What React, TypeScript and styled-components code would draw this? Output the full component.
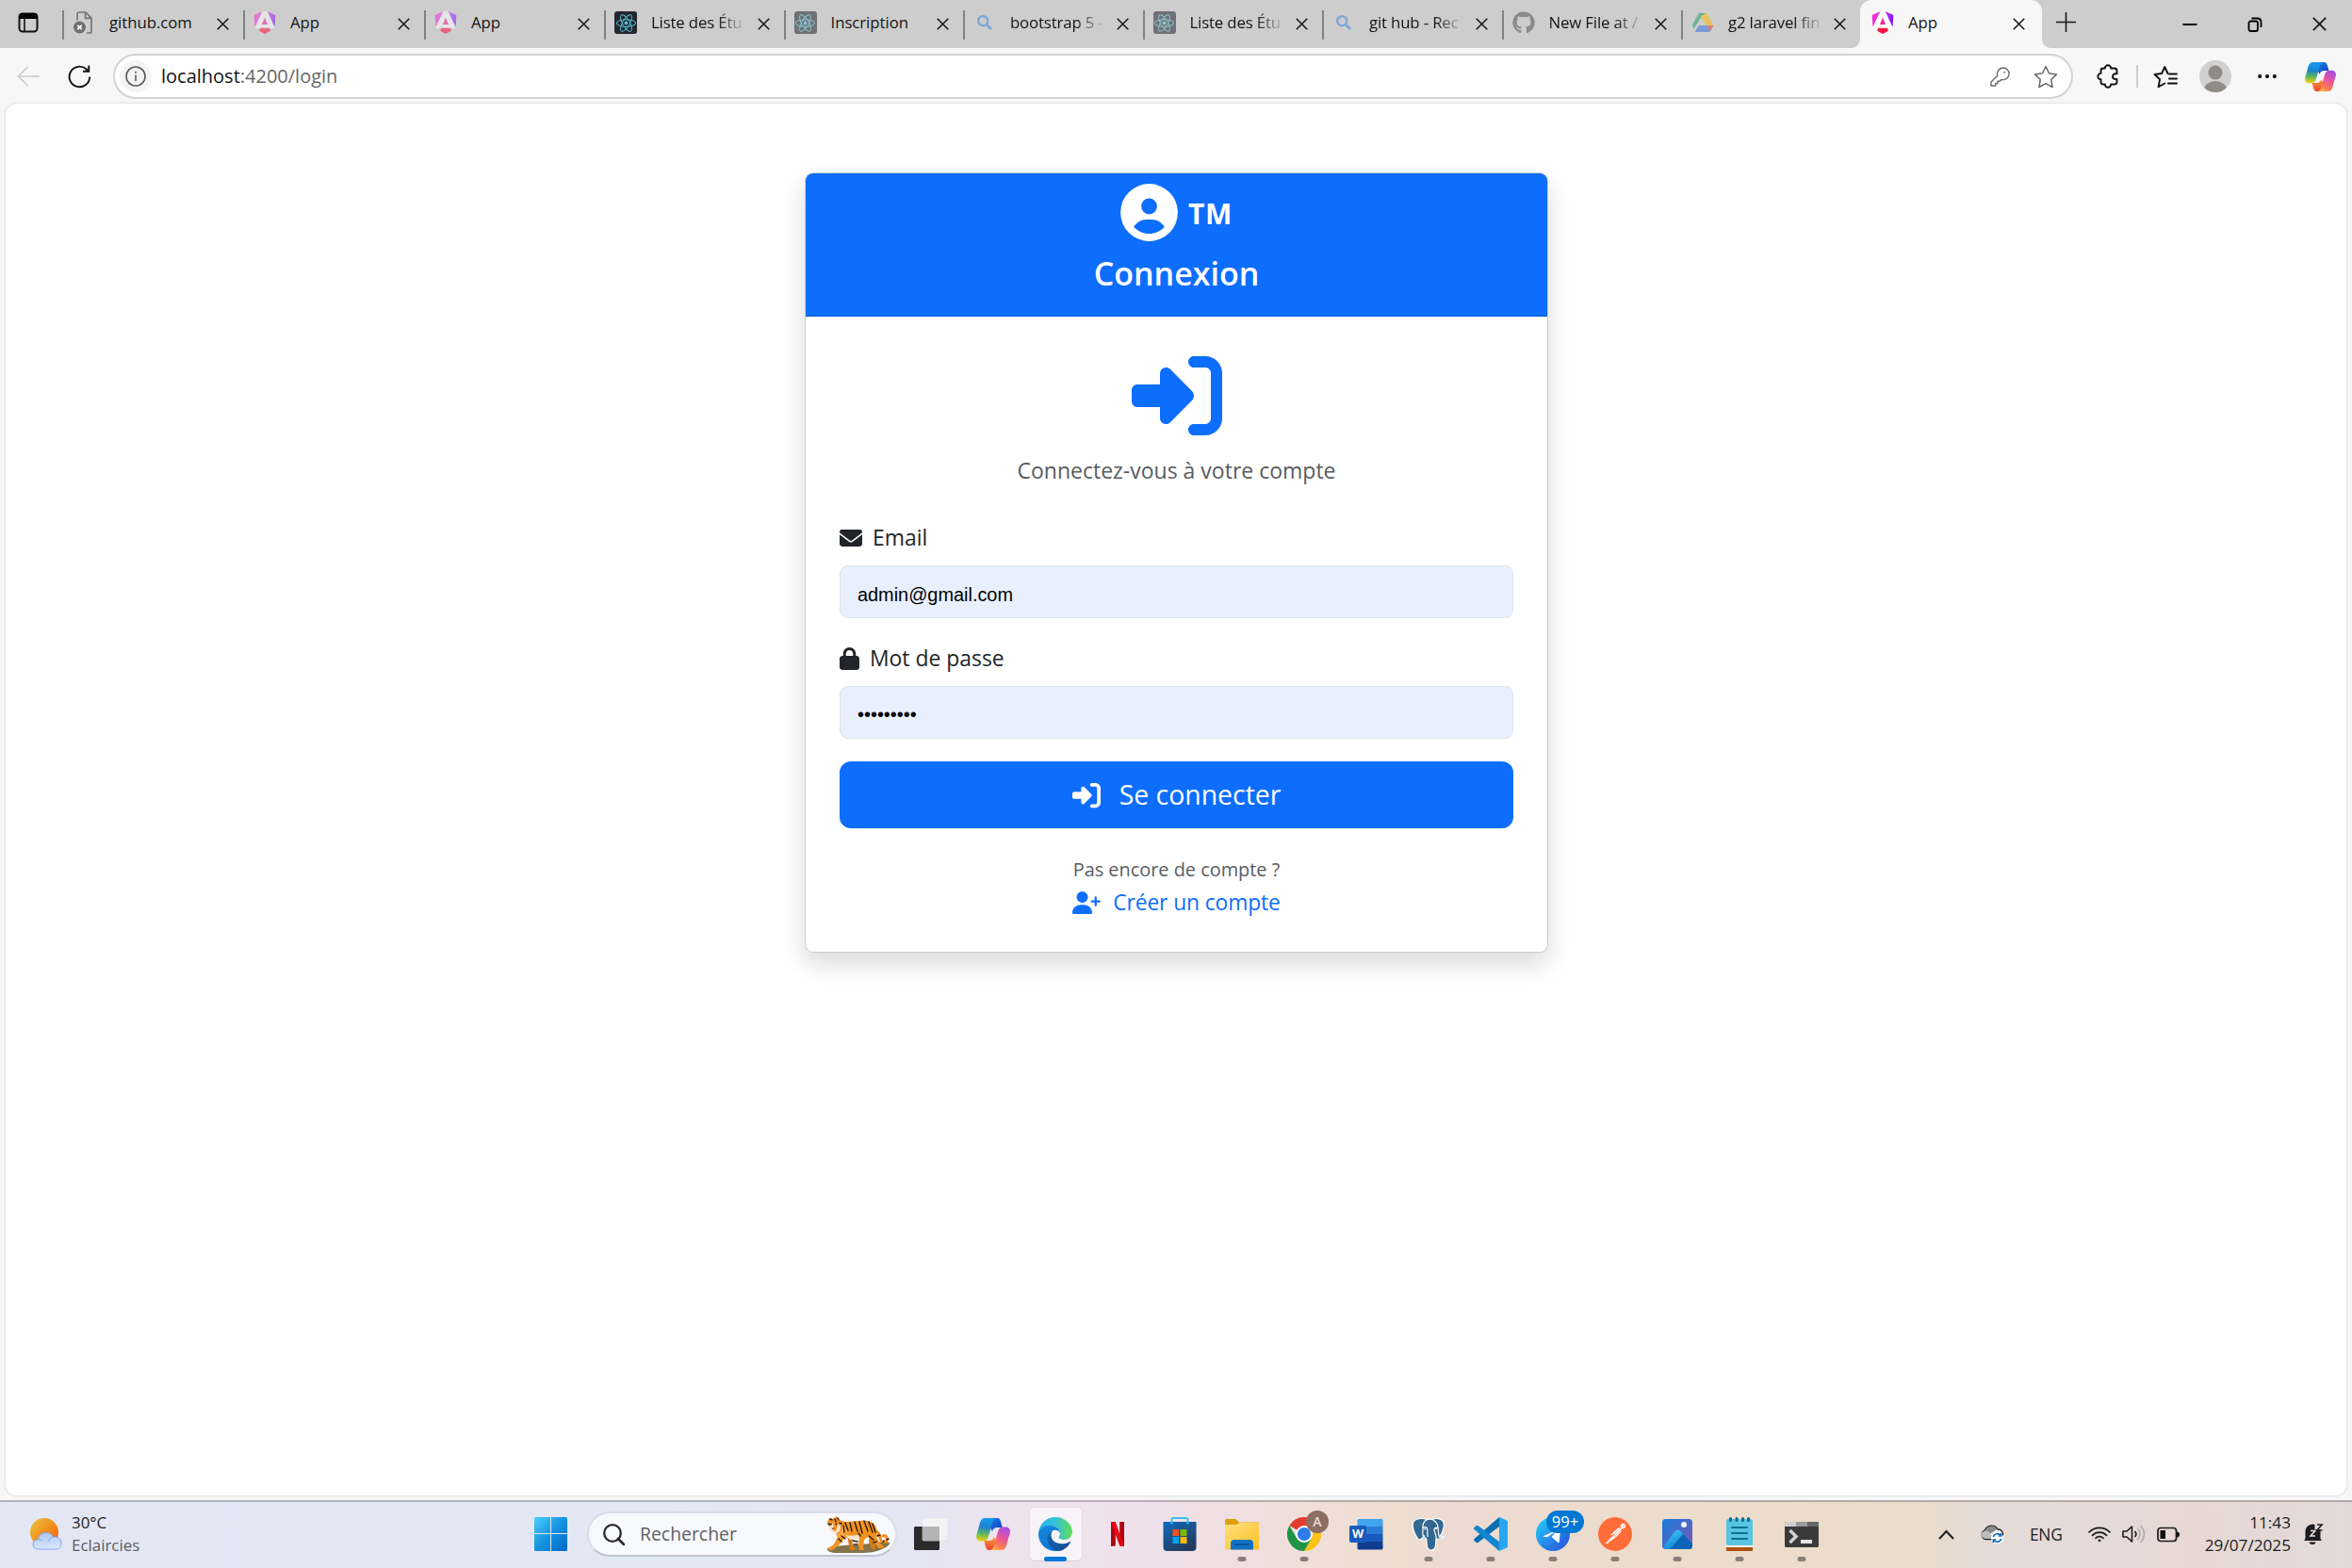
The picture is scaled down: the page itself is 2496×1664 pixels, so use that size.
import React from "react";
import styled, { createGlobalStyle, css } from "styled-components";
import { FaRightToBracket, FaEnvelope, FaLock, FaUserPlus, FaReact, FaGithub } from "react-icons/fa6";
import { SiPostman } from "react-icons/si";

const GlobalStyle = createGlobalStyle`
  * { box-sizing: border-box; }
  html, body { margin: 0; padding: 0; }
  body { font-family: "Open Sans", "Noto Sans", sans-serif; color: #1b1b1b; }
  svg { display: block; flex: none; }
`;

const Screen = styled.div`
  width: 2496px;
  height: 1664px;
  display: flex;
  flex-direction: column;
  overflow: hidden;
  background: #f7f7f7;
`;

/* ---------- Tab strip ---------- */

const TabStrip = styled.div`
  height: 51px;
  flex: none;
  display: flex;
  align-items: stretch;
  background: #cdcdcd;
`;

const StripStart = styled.div`
  width: 66px;
  display: flex;
  align-items: center;
  padding: 0 0 3px 19px;
`;

const TabBox = styled.div<{ $w: number; $active?: boolean }>`
  position: relative;
  width: ${(p) => p.$w}px;
  flex: none;
  display: flex;
  align-items: center;
  padding: 0 13px 3px 11px;
  ${(p) =>
    p.$active
      ? css`
          padding-left: 12px;
          padding-right: 16px;
          background: #f7f7f7;
          border-radius: 12px 12px 0 0;
          &::before,
          &::after {
            content: "";
            position: absolute;
            bottom: 0;
            width: 10px;
            height: 10px;
          }
          &::before {
            left: -10px;
            background: radial-gradient(circle at 0 0, transparent 9.5px, #f7f7f7 10.5px);
          }
          &::after {
            right: -10px;
            background: radial-gradient(circle at 100% 0, transparent 9.5px, #f7f7f7 10.5px);
          }
        `
      : css`
          background: linear-gradient(#838383, #838383) 0 11px / 2px 31px no-repeat;
        `}
`;

const Favicon = styled.span<{ $faded?: boolean }>`
  width: 24px;
  height: 24px;
  display: flex;
  align-items: center;
  justify-content: center;
  flex: none;
  opacity: ${(p) => (p.$faded ? 0.55 : 1)};
`;

const ReactTile = styled.span`
  width: 24px;
  height: 24px;
  display: flex;
  align-items: center;
  justify-content: center;
  border-radius: 3px;
  background: #23272f;
  color: #58c4dc;
`;

const TabTitle = styled.span<{ $fade?: boolean }>`
  width: 103px;
  margin-left: 15px;
  font-size: 16.8px;
  line-height: 30px;
  letter-spacing: -0.05px;
  white-space: nowrap;
  color: #141414;
  ${(p) =>
    p.$fade &&
    css`
      letter-spacing: -0.15px;
      mask-image: linear-gradient(90deg, #000 70px, transparent 101px);
    `}
`;

const CloseSlot = styled.span`
  margin-left: auto;
  padding: 2px 2px 0 0;
`;

const NewTab = styled.span`
  display: flex;
  align-items: center;
  padding: 0 0 4px 15px;
`;

const WindowControls = styled.div`
  margin-left: auto;
  display: flex;
  align-items: center;
  gap: 53px;
  padding: 0 27px 0 0;
`;

/* ---------- Address row ---------- */

const Toolbar = styled.div`
  height: 59px;
  flex: none;
  display: flex;
  align-items: center;
  padding: 1px 15px 0 18px;
`;

const BackSlot = styled.span`
  width: 54px;
`;
const ReloadSlot = styled.span`
  width: 48px;
`;

const AddressBar = styled.div`
  width: 2080px;
  height: 48px;
  flex: none;
  display: flex;
  align-items: center;
  border: 2px solid #d3d3d3;
  border-radius: 24px;
  background: #fff;
  padding: 0 14px 0 5px;
`;

const InfoBubble = styled.span`
  width: 34px;
  height: 34px;
  border-radius: 50%;
  background: #f4f4f4;
  display: flex;
  align-items: center;
  justify-content: center;
`;

const Url = styled.span`
  margin-left: 10px;
  font-size: 20px;
  line-height: 30px;
  color: #666;
  b {
    font-weight: 400;
    color: #111;
  }
`;

const AddressActions = styled.span`
  margin-left: auto;
  display: flex;
  align-items: center;
  gap: 25px;
`;

const ToolbarActions = styled.div`
  display: flex;
  align-items: center;
  padding-left: 5px;
`;

const ToolSlot = styled.span<{ $ml: number }>`
  margin-left: ${(p) => p.$ml}px;
`;

const ToolDivider = styled.span`
  width: 2px;
  height: 24px;
  margin-left: 17px;
  background: #cfcfcf;
`;

/* ---------- Page ---------- */

const PageFrame = styled.div`
  height: 1482px;
  flex: none;
  padding: 0 6px 5px;
`;

const Page = styled.main`
  height: 100%;
  display: flex;
  justify-content: center;
  align-items: flex-start;
  padding: 73px 0 0 1px;
  background: #fff;
  border-radius: 12px;
  box-shadow: 0 0 2px 1px rgba(0, 0, 0, 0.09);
`;

const Card = styled.section`
  width: 789px;
  height: 828px;
  border: 1px solid #cfcfd0;
  border-radius: 9px;
  background: #fff;
  box-shadow: 0 12px 24px rgba(0, 0, 0, 0.15);
`;

const CardHeader = styled.header`
  height: 152px;
  display: flex;
  flex-direction: column;
  align-items: center;
  padding-top: 11px;
  color: #fff;
  background: #0d6efd;
  border-bottom: 1px solid #0a5cd6;
  border-radius: 8px 8px 0 0;
`;

const Brand = styled.div`
  display: flex;
  align-items: center;
  gap: 11px;
  height: 61px;
  font-size: 30px;
  font-weight: 700;
  line-height: 40px;
  letter-spacing: 0.6px;
`;

const BrandName = styled.span`
  padding-top: 3px;
`;

const Heading = styled.h1`
  margin: 12px 0 0;
  font-size: 34px;
  font-weight: 600;
  line-height: 44px;
`;

const CardBody = styled.div`
  padding: 36px 36px 0;
  display: flex;
  flex-direction: column;
`;

const Hero = styled.div`
  display: flex;
  justify-content: center;
  color: #0d6efd;
`;

const Lead = styled.p`
  margin: 13px 0 0;
  text-align: center;
  font-size: 23px;
  line-height: 36px;
  color: #595c5f;
`;

const Label = styled.label<{ $top: number; $gap: number }>`
  display: flex;
  align-items: center;
  gap: ${(p) => p.$gap}px;
  height: 36px;
  margin-top: ${(p) => p.$top}px;
  color: #212529;
  font-size: 22.9px;
  line-height: 36px;
`;

const Field = styled.div<{ $lift?: number }>`
  height: 56px;
  margin-top: 11px;
  padding: ${(p) => 2 - (p.$lift || 0)}px 18px 0;
  border: 1px solid #dee2e6;
  border-radius: 9px;
  background: #e8f0fe;
  color: #000;
  font-family: "Liberation Sans", Arial, sans-serif;
  font-size: 19.9px;
  line-height: 56px;
`;

const Submit = styled.button`
  height: 71px;
  margin-top: 24px;
  padding: 0;
  border: 0;
  border-radius: 12px;
  background: #0d6efd;
  color: #fff;
  font-family: inherit;
  font-size: 28.4px;
  line-height: 45px;
  display: flex;
  align-items: center;
  justify-content: center;
  gap: 20px;
`;

const Hint = styled.p`
  margin: 28px 0 0;
  text-align: center;
  font-size: 19.9px;
  line-height: 32px;
  color: #595c5f;
`;

const SignUp = styled.a`
  display: flex;
  align-items: center;
  justify-content: center;
  gap: 13px;
  margin-top: 1px;
  font-size: 22.8px;
  line-height: 36px;
  letter-spacing: -0.1px;
  color: #0d6efd;
`;

/* ---------- Taskbar ---------- */

const Taskbar = styled.footer`
  height: 72px;
  flex: none;
  display: flex;
  align-items: center;
  padding-bottom: 2px;
  border-top: 2px solid rgba(90, 80, 90, 0.36);
  background: linear-gradient(
    90deg,
    #e4e7f4 0,
    #e1e8f4 300px,
    #e2e8f4 700px,
    #e6e5f3 980px,
    #eee3ed 1080px,
    #efe1ea 1230px,
    #f0dfe2 1290px,
    #efdfd8 1390px,
    #eeddd0 1490px,
    #ecdad3 1540px,
    #ecdccf 1640px,
    #ebdcca 1950px,
    #e9dccb 2040px,
    #e4dbd8 2110px,
    #e5dad7 2220px,
    #e8d8d3 2330px,
    #e2dad9 2496px
  );
`;

const Weather = styled.div`
  width: 567px;
  flex: none;
  display: flex;
  align-items: center;
  gap: 10px;
  padding-left: 32px;
`;

const Lines = styled.div<{ $right?: boolean }>`
  display: flex;
  flex-direction: column;
  align-items: ${(p) => (p.$right ? "flex-end" : "flex-start")};
  font-size: ${(p) => (p.$right ? 17.2 : 16.9)}px;
  line-height: 24px;
  color: #1c1c1e;
`;

const Muted = styled.span`
  color: #5b5d63;
`;

const StartSlot = styled.div`
  width: 56px;
  flex: none;
`;

const Search = styled.div`
  width: 329px;
  height: 48px;
  flex: none;
  display: flex;
  align-items: center;
  padding: 0 5px 0 15px;
  border: 2px solid #dadcea;
  border-bottom-color: #c3c5d2;
  border-radius: 24px;
  background: #f8f9fd;
  color: #5f6065;
  font-size: 19.4px;
  line-height: 30px;
`;

const SearchText = styled.span`
  flex: 1;
  margin-left: 16px;
`;

const Apps = styled.div`
  display: flex;
  flex: none;
  margin-left: 3px;
`;

const AppCell = styled.div`
  position: relative;
  width: 66px;
  height: 68px;
  display: flex;
  align-items: center;
  justify-content: center;
`;

const ActiveTile = styled.div`
  width: 57px;
  height: 58px;
  flex: none;
  border: 1px solid #e6dde7;
  border-bottom-color: #d8ced8;
  border-radius: 6px;
  background: #f8f3f8;
  display: flex;
  align-items: center;
  justify-content: center;
  padding-bottom: 1px;
`;

const Pip = styled.span<{ $active?: boolean }>`
  position: absolute;
  bottom: 5px;
  left: 50%;
  width: ${(p) => (p.$active ? 24 : 9)}px;
  height: 5px;
  transform: translateX(-50%);
  border-radius: 3px;
  background: ${(p) => (p.$active ? "#0078d7" : "#877e78")};
`;

const Badge = styled.span<{ $blue?: boolean }>`
  position: absolute;
  top: 9px;
  left: ${(p) => (p.$blue ? 26 : 35)}px;
  width: ${(p) => (p.$blue ? 40 : 24)}px;
  height: 24px;
  border-radius: 12px;
  background: ${(p) => (p.$blue ? "#0078d4" : "#8d6e63")};
  color: ${(p) => (p.$blue ? "#fff" : "#e3d9d5")};
  font-size: ${(p) => (p.$blue ? 16.5 : 14)}px;
  font-weight: ${(p) => (p.$blue ? 400 : 600)};
  line-height: 24px;
  text-align: center;
`;

const WordBadge = styled.span`
  position: absolute;
  left: 15px;
  top: 25px;
  width: 18px;
  height: 18px;
  border-radius: 2px;
  background: #185abd;
  color: #fff;
  font-size: 12.5px;
  font-weight: 700;
  line-height: 18px;
  text-align: center;
`;

const Tray = styled.div`
  margin-left: auto;
  display: flex;
  align-items: center;
  padding-right: 30px;
`;

const Language = styled.span`
  width: 35px;
  margin: 0 27px 0 27px;
  font-size: 17.4px;
  letter-spacing: -0.3px;
  line-height: 26px;
  color: #1c1c1e;
`;

const TrayGroup = styled.div`
  display: flex;
  align-items: center;
  gap: 12px;
  margin-right: 26px;
`;

const Clock = styled.div`
  width: 92px;
  margin-right: 13px;
`;

/* ---------- Drawings ---------- */

const CloseGlyph = ({ size = 13 }: { size?: number }) => (
  <svg width={size} height={size} viewBox="0 0 14 14" fill="none" stroke="#1a1a1a" strokeWidth="1.7">
    <path d="M.8.8l12.4 12.4M13.2.8L.8 13.2" />
  </svg>
);

const AngularMark = ({ id }: { id: string }) => (
  <svg width="24" height="24" viewBox="0 0 24 24">
    <defs>
      <linearGradient id={id} gradientUnits="userSpaceOnUse" x1="1" y1="3" x2="24" y2="9">
        <stop offset="0" stopColor="#f62bd0" />
        <stop offset="0.5" stopColor="#e33af0" />
        <stop offset="1" stopColor="#6d14ff" />
      </linearGradient>
      <linearGradient id={`${id}a`} gradientUnits="userSpaceOnUse" x1="8" y1="14" x2="15" y2="8">
        <stop offset="0" stopColor="#fb1f62" />
        <stop offset="1" stopColor="#ea35d8" />
      </linearGradient>
    </defs>
    <path fill="#fff" opacity="0.85" d="M9.308 0h5.384l7.832 16.855-.9 1.6-4.912-.744H7.288l-4.912.744-.9-1.6z" />
    <path fill={`url(#${id})`} d="M14.692 0l7.832 16.855.814-12.856zM9.308 0L.662 3.999l.814 12.856z" />
    <path fill={`url(#${id}a)`} d="M12 6.4l3.1 7.53H8.9z" />
    <path fill="#fb1342" d="M16.712 17.711H7.288l-1.204 2.916L12 24l5.916-3.373z" />
  </svg>
);

const BrokenFile = () => (
  <svg width="24" height="24" viewBox="0 0 24 24" fill="none" stroke="#777" strokeWidth="1.7">
    <path d="M5 9.500V3a2 2 0 012-2h7l6 6.300V21a2 2 0 01-2 2h-3M13.500 1v6.300H20" />
    <circle cx="7.500" cy="17" r="6.500" fill="#6f6f6f" stroke="none" />
    <path d="M5.300 14.800l4.400 4.400M9.700 14.800l-4.400 4.400" stroke="#fff" />
  </svg>
);

const BingSearch = () => (
  <svg width="18" height="18" viewBox="0 0 18 18" fill="none" stroke="#3f8ad8" strokeWidth="2.4">
    <circle cx="7.2" cy="7.2" r="5" />
    <path d="M11 11l5 5" strokeWidth="3" />
  </svg>
);

const DriveMark = () => (
  <svg width="24" height="22" viewBox="0 0 24 22">
    <path fill="#1ea362" d="M8 1h4.6L4.6 14.5 2.7 17.5.6 14z" />
    <path fill="#0f9d58" d="M8 1h8l-4 6.6z" />
    <path fill="#ffba00" d="M16 1l7.400 13h-7.800L9.600 4z" />
    <path fill="#3777e3" d="M7.600 14H23.400l-4 7H3.700z" />
    <path fill="#ea4335" d="M17 14h6.400l-3.500 6.200z" />
  </svg>
);

const Copilot = ({ w, h, id }: { w: number; h: number; id: string }) => (
  <svg width={w} height={h} viewBox="0 0 36 34" preserveAspectRatio="none">
    <defs>
      <linearGradient id={`${id}a`} x1="0.4" y1="0" x2="0.3" y2="1">
        <stop offset="0.1" stopColor="#1497e8" />
        <stop offset="0.4" stopColor="#1f83c9" />
        <stop offset="0.68" stopColor="#5cb75b" />
        <stop offset="0.98" stopColor="#f0cf12" />
      </linearGradient>
      <linearGradient id={`${id}b`} x1="0.7" y1="0" x2="0.3" y2="1">
        <stop offset="0" stopColor="#a64be6" />
        <stop offset="0.45" stopColor="#e9569b" />
        <stop offset="0.8" stopColor="#fb7a52" />
        <stop offset="1" stopColor="#ffae4c" />
      </linearGradient>
      <linearGradient id={`${id}c`} x1="0" y1="0" x2="1" y2="1">
        <stop offset="0" stopColor="#1a8ff0" />
        <stop offset="1" stopColor="#1239b8" />
      </linearGradient>
      <linearGradient id={`${id}d`} x1="0" y1="0" x2="0" y2="1">
        <stop offset="0" stopColor="#f99c2e" />
        <stop offset="1" stopColor="#ea4335" />
      </linearGradient>
    </defs>
    <path fill={`url(#${id}c)`} d="M9 0h13c3 0 3.6 2 4.4 5l1.3 5h-5c-3.200 0-4.700 1-5.700 4z" />
    <path fill={`url(#${id}d)`} d="M27 34H14c-3 0-3.600-2-4.400-5L8.300 24h5c3.200 0 4.700-1 5.700-4z" />
    <path fill={`url(#${id}a)`} d="M9.500 0H21c-2.500.6-3.300 3-4 5.500l-4 14c-1 3.500-2.600 5-6 5H5c-4 0-5.600-3-4.600-7L4 5c1-3.200 2.500-5 5.500-5z" />
    <path fill={`url(#${id}b)`} d="M26.500 34H15c2.500-.6 3.300-3 4-5.500l4-14c1-3.500 2.600-5 6-5h2c4 0 5.600 3 4.600 7L32 29c-1 3.200-2.500 5-5.500 5z" />
  </svg>
);

const AccountCircle = () => (
  <svg width="61" height="61" viewBox="0 0 61 61">
    <circle cx="30.5" cy="30.5" r="30.4" fill="#fff" />
    <circle cx="30.5" cy="24" r="8.4" fill="#0d6efd" />
    <path fill="#0d6efd" d="M14.200 45.700C17.300 41 22 38 27 38h7c5 0 9.700 3 12.800 7.700C42.600 50.300 37 53 30.500 53s-12.100-2.700-16.300-7.300z" />
  </svg>
);

const Tiger = () => (
  <svg width="68" height="40" viewBox="0 0 68 40">
    <path fill="#84734a" d="M1 35c8-2 20-4 30-3 10-1 24-4 36-3 1 2-3 5-8 7-6 3-14 4-24 4H12C5 40 0 38 1 35z" />
    <path fill="none" stroke="#ee8a1c" strokeWidth="3" strokeLinecap="round" d="M53 17c5 3 3 9 6 11s6 0 5-4c-.5-2-2-3-4-2" />
    <path fill="#d97913" d="M22 22l5 1 1 10 3 2-1 2h-5zM46 20l6 3-2 5 2 7 1 1h-5l-3-8z" />
    <path fill="#f2921f" d="M3 3l4 1 4-3 3 4 6 2c8 0 15-2 24-1 6 1 10 6 10 13l-1 4 4 7 4 3-1 2h-5l-6-9-5-3-4 3-1 8 1 3h-5l-1-6 1-8-9 0-6 1-6 7-6 5-2 1H3l-1-2 6-4 4-8-2-5-6-3-3-8z" />
    <path fill="#fae3cb" d="M4 8l3 1 1 6-1 3-4-2zM12 9l3 3-1 5-5 3-1-2 3-3zM20 21c5 1 11 1 15-1l-1 5-9 1z" />
    <path fill="#f7a744" d="M12 4l5 6-2 8-5 4 5 2 8-6z" />
    <g stroke="#2d1a0d" strokeWidth="1.400" fill="none" strokeLinecap="round">
      <path d="M20 8l3 8M25 8l2 9M30 7l3 10M35 7l3 12M40 6l4 11M45 7l4 11M49 9l3 9M18 11l1 7M16 22l4 3M13 25l3 3M28 27l5 1M29 31l4 0M45 22l5 4M50 29l3-1M54 22l3-1M60 29l1-2M64 26l2-1M4 4l2 1M9 4l1 3M12 3l1 2M2 9l2 1M14 8l2 1M34 19l2 3" />
    </g>
    <circle cx="5" cy="9.500" r="1" fill="#222" />
    <circle cx="10.500" cy="9.500" r="1" fill="#222" />
    <path d="M5.500 13.500h3l-1.500 2z" fill="#6b2c1a" />
  </svg>
);

const WeatherIcon = () => (
  <svg width="34" height="34" viewBox="0 0 34 34">
    <defs>
      <linearGradient id="sun" x1="0.100" y1="0.100" x2="0.900" y2="0.800">
        <stop offset="0" stopColor="#edbd36" />
        <stop offset="1" stopColor="#f26a0c" />
      </linearGradient>
      <linearGradient id="cloud" x1="0" y1="0" x2="0.200" y2="1">
        <stop offset="0" stopColor="#a9c4f2" />
        <stop offset="1" stopColor="#d7e5fb" />
      </linearGradient>
    </defs>
    <circle cx="15" cy="15" r="15" fill="url(#sun)" />
    <path fill="url(#cloud)" stroke="#84a5e8" strokeWidth="1" d="M8.500 33C5 33 3 31 3 28s2.500-5.300 5.500-5.300C9 18 12.500 15.500 17 15.500c4 0 6.500 2 7.500 4.500 5-.6 8.500 2.400 8.500 6.500 0 4-2.500 6.500-5.500 6.500z" />
    <path fill="none" stroke="#84a5e8" strokeWidth="1" d="M20 25c0-3 2-4.800 4.500-5M8.500 22.700c2 0 3.500.5 4.300 1.500" />
  </svg>
);

const WindowsStart = () => (
  <svg width="35" height="36" viewBox="0 0 35 36">
    <defs>
      <linearGradient id="win" x1="0" y1="0" x2="1" y2="1">
        <stop offset="0" stopColor="#4fd0fb" />
        <stop offset="0.500" stopColor="#1492df" />
        <stop offset="1" stopColor="#0067c8" />
      </linearGradient>
    </defs>
    <path fill="url(#win)" d="M1.500 0H17v17H0V1.500Q0 0 1.500 0zM18 0h15.500Q35 0 35 1.500V17H18zM0 18h17v18H1.500Q0 36 0 34.500zM18 18h17v16.500q0 1.500-1.500 1.500H18z" />
  </svg>
);

const TaskView = () => (
  <svg width="36" height="34" viewBox="0 0 36 34">
    <rect x="0" y="9" width="27" height="25" rx="1.500" fill="#2a2a2b" />
    <rect x="9" y="0" width="27" height="24" rx="1.500" fill="#f3f3f4" stroke="#dcdce0" strokeWidth="0.700" />
    <path d="M9 9h18v15H10.500Q9 24 9 22.500z" fill="#b3b3b3" />
  </svg>
);

const EdgeIcon = () => (
  <svg width="36" height="36" viewBox="0 0 36 36">
    <defs>
      <linearGradient id="edgeA" x1="0" y1="0.400" x2="1" y2="0.400">
        <stop offset="0" stopColor="#25b4e6" />
        <stop offset="0.500" stopColor="#35c1d8" />
        <stop offset="1" stopColor="#63dd52" />
      </linearGradient>
      <linearGradient id="edgeB" x1="0" y1="0" x2="0.500" y2="1">
        <stop offset="0" stopColor="#1687dd" />
        <stop offset="1" stopColor="#0a7ad6" />
      </linearGradient>
      <linearGradient id="edgeC" x1="0" y1="0" x2="1" y2="0.500">
        <stop offset="0" stopColor="#1067b4" />
        <stop offset="1" stopColor="#134d96" />
      </linearGradient>
    </defs>
    <path fill="url(#edgeA)" d="M0 17C1 7 8.500 0 18 0c10.500 0 18 8 18 15.500 0 5-3.800 8.500-8.500 8.500-3.500 0-6-1.500-6-2.500s1.500-1.500 1.500-4c0-3-3-5.500-7-5.500C9 12 2.500 13 0 17z" />
    <path fill="url(#edgeB)" d="M0 18C.5 12 6 9 11.500 9c6.500 0 11.500 4 11.500 8-.5-1.800-2.500-3.200-5-3.200-5 0-8 4.500-8 9C10 29 15 34 22 35.500c-1.300.4-2.700.5-4 .5C8 36 0 28 0 18z" />
    <path fill="url(#edgeC)" d="M15.500 14.300c-1.700 1.500-2 3.200-2 5 0 5 4.500 9 11 9 4 0 7-1.200 8.800-2.400.6-.3 1 .2.700.8C31 32.500 25.500 36 20.500 36 14 35.500 9.500 29 9.500 23c0-4.500 2.500-7.700 6-8.700z" />
  </svg>
);

const NetflixIcon = () => (
  <svg width="14" height="26" viewBox="0 0 14 26">
    <path fill="#b1060f" d="M0 0h4.800v25.500L0 26zM9.200 0H14v26l-4.800-.5z" />
    <path fill="#e50914" d="M0 0h4.800L14 26l-4.800-.6z" />
  </svg>
);

const StoreIcon = () => (
  <svg width="36" height="36" viewBox="0 0 36 36">
    <defs>
      <linearGradient id="store" x1="0" y1="0" x2="0.600" y2="1">
        <stop offset="0" stopColor="#0f6cbd" />
        <stop offset="1" stopColor="#243a5e" />
      </linearGradient>
    </defs>
    <path fill="url(#store)" d="M0.500 5h35v27q0 4-4 4h-27q-4 0-4-4z" />
    <path fill="none" stroke="#36c0f2" strokeWidth="2" d="M9.500 7.500V2.300Q9.500 1 11 1h14q1.500 0 1.500 1.300v5.200" />
    <path fill="#f25022" d="M10.500 13H17v7h-6.500z" />
    <path fill="#7fba00" d="M18.500 13h7v7h-7z" />
    <path fill="#00a4ef" d="M10.500 21H17v7h-6.500z" />
    <path fill="#ffb900" d="M18.500 21h7v7h-7z" />
  </svg>
);

const ExplorerIcon = () => (
  <svg width="36" height="33" viewBox="0 0 36 33">
    <defs>
      <linearGradient id="folder" x1="0" y1="0" x2="1" y2="1">
        <stop offset="0" stopColor="#ffe07a" />
        <stop offset="1" stopColor="#fbc02a" />
      </linearGradient>
    </defs>
    <path fill="#dd9f0b" d="M0 1.500Q0 0 1.500 0h10l3.500 3.500h19.500Q36 3.500 36 5v6H0z" />
    <path fill="url(#folder)" d="M0 6h12l3-2h20q1 0 1 1v26q0 1.500-1.500 1.500h-33Q0 32.500 0 31z" />
    <path fill="#0f72c5" d="M6 32.500V26q0-4 4-4h16q4 0 4 4v6.500z" />
    <path stroke="#0b4f91" strokeWidth="1.500" strokeLinecap="round" d="M11 27h14" />
  </svg>
);

const ChromeIcon = () => (
  <svg width="36" height="36" viewBox="0 0 36 36">
    <path fill="#e33b2e" d="M18 18L2.400 9A18 18 0 0133.600 9z" />
    <path fill="#fbc116" d="M18 9h15.600A18 18 0 0118 36l7.800-13.500z" />
    <path fill="#1e9545" d="M2.400 9A18 18 0 0018 36l7.800-13.500-15.600 0z" />
    <circle cx="18" cy="18" r="9" fill="#fff" />
    <circle cx="18" cy="18" r="7.100" fill="#2f7bea" />
  </svg>
);

const WordIcon = () => (
  <svg width="36" height="33" viewBox="0 0 36 33">
    <path fill="#41a5ee" d="M10 0h24q1.500 0 1.500 1.500V8h-27V1.500Q8.500 0 10 0z" />
    <path fill="#2b7cd3" d="M8.500 8h27v8h-27z" />
    <path fill="#185abd" d="M8.500 16h27v8h-27z" />
    <path fill="#103f91" d="M8.500 24h27v7q0 1.500-1.500 1.500H10q-1.500 0-1.500-1.500z" />
  </svg>
);

const ElephantIcon = () => (
  <svg width="36" height="36" viewBox="0 0 36 36" strokeLinejoin="round" strokeLinecap="round">
    <path
      fill="#336791"
      stroke="#fff"
      strokeWidth="1.200"
      d="M10 1.500c3-.3 5 .7 6 1.300 1.600-.7 4-.9 6.300-.3 2-1 5-1.300 7.700-.4 3.500 1.200 4.800 4 4.200 7.900-.6 4-2.700 8.500-4.500 11.200 1.600.2 3-.2 4.600-.7-1 2.200-4.300 3-8.300 2.800-.3 3-.3 6-.8 8.200-.7 2.700-2.400 3.600-4.600 3.500-2.800-.1-4-1.700-4.300-4.600l-.6-7.400c-1.700.4-3.300.4-5-.2-1.300 1.800-3 2-4.500-.4C3.400 18.300 1.500 12.500 1.300 8.300 1.100 3.800 5 1.900 10 1.500z"
    />
    <path
      fill="none"
      stroke="#fff"
      strokeWidth="1.200"
      d="M16 2.800c-3 1.700-4.300 5-4 9 .2 3-.3 4.500-.2 6.500.1 2 1.700 3.200 3.600 4.600M12 11.500c1.800-1.500 4.500-1.200 4.700 1 .3 3-.3 5.500.4 8M22.300 2.500c4 2.500 6 6.500 6 9.700.2 3.300-.2 5.300 1.200 9M28.300 12c-2-1.500-4.200-.8-4.300 1.200.2 3.500 2.300 5 2.200 9.800M10.700 22.700l3-2.700"
    />
    <circle cx="14.300" cy="12.700" r="0.900" fill="#fff" />
    <circle cx="26" cy="12.300" r="0.900" fill="#fff" />
  </svg>
);

const CodeIcon = () => (
  <svg width="36" height="36" viewBox="0 0 36 36">
    <path fill="#0b6fb4" d="M27 0v10L4.500 27Q3.500 27.500 2.700 27l-2.200-2q-1-1 0-2z" />
    <path fill="#1286ce" d="M27 36V26L4.500 9q-1-.5-1.800 0l-2.200 2q-1 1 0 2z" />
    <path fill="#27a7f0" d="M27 0l8 3.500q1 .5 1 1.500v26q0 1-1 1.500L27 36q-1 .3-1.500-.5 1.500.5 1.500-1.200V1.700Q27 0 25.500.5 26-.3 27 0z" />
  </svg>
);

const TelegramIcon = () => (
  <svg width="36" height="36" viewBox="0 0 36 36">
    <defs>
      <linearGradient id="tg" x1="0" y1="0.200" x2="0.800" y2="1">
        <stop offset="0" stopColor="#22c6fb" />
        <stop offset="1" stopColor="#2a56dc" />
      </linearGradient>
    </defs>
    <circle cx="18" cy="18" r="18" fill="url(#tg)" />
    <path fill="#fff" d="M7 20.500L26 12l-1.300 14.500q-.3 1.200-1.300.5L16.500 21l5-6L12 21.300z" />
  </svg>
);

const PhotosIcon = () => (
  <svg width="32" height="32" viewBox="0 0 32 32">
    <defs>
      <linearGradient id="phSky" x1="0" y1="0" x2="1" y2="0.900">
        <stop offset="0" stopColor="#147cdb" />
        <stop offset="1" stopColor="#7a59b5" />
      </linearGradient>
      <linearGradient id="phHill" x1="0" y1="0" x2="0.600" y2="1">
        <stop offset="0" stopColor="#49d6fb" />
        <stop offset="1" stopColor="#0e7fd8" />
      </linearGradient>
    </defs>
    <rect width="32" height="32" rx="3.500" fill="url(#phSky)" />
    <path fill="#0c64b8" d="M13 14q3.500-3.500 7 0l12 12v2.500q0 3.500-3.500 3.500H8z" />
    <path fill="url(#phHill)" d="M1 30L13 13.500q3-3.500 6.500-.5l3 3L8 31.900H3.500Q2 31.900 1 30z" />
    <circle cx="23" cy="6" r="3" fill="#f2f4fb" />
  </svg>
);

const NotepadIcon = () => (
  <svg width="28" height="36" viewBox="0 0 28 36">
    <path fill="#ad5210" d="M0 32h28v3q0 1-1 1H1q-1 0-1-1z" />
    <path fill="#f3f1f0" d="M0 28h28v4H0z" />
    <path fill="#58c4e0" d="M0 4q0-2 2-2h24q2 0 2 2v26H2q-2 0-2-2z" />
    <path stroke="#0b6d93" strokeWidth="2" strokeLinecap="round" d="M6 11h16M6 17h16M6 23h16" />
    <path stroke="#0f6b91" strokeWidth="3" strokeLinecap="round" d="M4.500 1.500v2M11 1.500v2M17.500 1.500v2M23.500 1.500v2" />
  </svg>
);

const TerminalIcon = () => (
  <svg width="36" height="27" viewBox="0 0 36 27">
    <rect width="36" height="27" rx="1.500" fill="#3a3a3a" />
    <path fill="#cfcfcf" d="M1.500 0H12v5H0V1.500Q0 0 1.500 0z" />
    <path fill="#999" d="M12 0h12v5H12z" />
    <path fill="#666" d="M24 0h10.500Q36 0 36 1.500V5H24z" />
    <path fill="none" stroke="#d2d2d2" strokeWidth="3.500" d="M5.500 9l6.500 6.500L5.500 22" />
    <path fill="#e6e6e6" d="M17 19h12v4H17z" />
  </svg>
);

const PostmanDisc = styled.span`
  border-radius: 50%;
  background: #fff;
  color: #ff6c37;
`;

/* ---------- Data ---------- */

type TabDef = { title: string; w: number; icon: React.ReactNode; faded?: boolean; fade?: boolean; active?: boolean };

const ReactFav = () => (
  <ReactTile>
    <FaReact size={21} />
  </ReactTile>
);

const tabs: TabDef[] = [
  { title: "github.com", w: 192, icon: <BrokenFile /> },
  { title: "App", w: 192, icon: <AngularMark id="ng1" />, faded: true },
  { title: "App", w: 191, icon: <AngularMark id="ng2" />, faded: true },
  { title: "Liste des Étu", w: 190.5, icon: <ReactFav />, fade: true },
  { title: "Inscription", w: 190.5, icon: <ReactFav />, faded: true },
  { title: "bootstrap 5 -", w: 190.5, icon: <BingSearch />, faded: true, fade: true },
  { title: "Liste des Étu", w: 190.5, icon: <ReactFav />, faded: true, fade: true },
  { title: "git hub - Rec", w: 190.5, icon: <BingSearch />, faded: true, fade: true },
  { title: "New File at /", w: 190.5, icon: <FaGithub size={24} color="#555" />, faded: true, fade: true },
  { title: "g2 laravel fin", w: 190, icon: <DriveMark />, faded: true, fade: true },
  { title: "App", w: 193, icon: <AngularMark id="ng3" />, active: true },
];

const apps: { icon: React.ReactNode; pip?: boolean }[] = [
  { icon: <TaskView /> },
  { icon: <Copilot w={36} h={34} id="cpB" /> },
  {
    icon: (
      <>
        <ActiveTile>
          <EdgeIcon />
        </ActiveTile>
        <Pip $active />
      </>
    ),
  },
  { icon: <NetflixIcon /> },
  { icon: <StoreIcon /> },
  { icon: <ExplorerIcon />, pip: true },
  {
    icon: (
      <>
        <ChromeIcon />
        <Badge>A</Badge>
      </>
    ),
    pip: true,
  },
  {
    icon: (
      <>
        <WordIcon />
        <WordBadge>W</WordBadge>
      </>
    ),
  },
  { icon: <ElephantIcon />, pip: true },
  { icon: <CodeIcon />, pip: true },
  {
    icon: (
      <>
        <TelegramIcon />
        <Badge $blue>99+</Badge>
      </>
    ),
    pip: true,
  },
  {
    icon: (
      <PostmanDisc>
        <SiPostman size={36} />
      </PostmanDisc>
    ),
    pip: true,
  },
  { icon: <PhotosIcon />, pip: true },
  { icon: <NotepadIcon />, pip: true },
  { icon: <TerminalIcon />, pip: true },
];

export default function App() {
  return (
    <>
      <GlobalStyle />
      <Screen>
        <TabStrip>
          <StripStart>
            <svg width="22" height="22" viewBox="0 0 22 22">
              <rect x="1.500" y="1.500" width="19" height="19" rx="3.500" fill="none" stroke="#111" strokeWidth="2" />
              <path fill="#000" d="M1 7V4.500Q1 1 4.500 1h13Q21 1 21 4.500V7z" />
              <path stroke="#111" strokeWidth="1.600" d="M7 7v13.500" />
            </svg>
          </StripStart>
          {tabs.map((t, i) => (
            <TabBox key={i} $w={t.w} $active={t.active}>
              <Favicon $faded={t.faded}>{t.icon}</Favicon>
              <TabTitle $fade={t.fade}>{t.title}</TabTitle>
              <CloseSlot>
                <CloseGlyph />
              </CloseSlot>
            </TabBox>
          ))}
          <NewTab>
            <svg width="21" height="21" viewBox="0 0 21 21" stroke="#1a1a1a" strokeWidth="1.600">
              <path d="M10.500 0v21M0 10.500h21" />
            </svg>
          </NewTab>
          <WindowControls>
            <svg width="16" height="16" viewBox="0 0 16 16">
              <path d="M0.500 8h15" stroke="#000" strokeWidth="2" />
            </svg>
            <svg width="16" height="16" viewBox="0 0 16 16" fill="none" stroke="#000" strokeWidth="1.800">
              <rect x="1.500" y="4.500" width="9.500" height="10.500" rx="2" />
              <path d="M4.500 1.500h6q4 0 4 4v5.500" />
            </svg>
            <CloseGlyph size={15} />
          </WindowControls>
        </TabStrip>

        <Toolbar>
          <BackSlot>
            <svg width="24" height="22" viewBox="0 0 24 22" fill="none" stroke="#cacaca" strokeWidth="1.600">
              <path d="M23.500 11H1.500M11.500 1l-10 10 10 10" />
            </svg>
          </BackSlot>
          <ReloadSlot>
            <svg width="25" height="25" viewBox="0 0 25 25" fill="none" stroke="#111" strokeWidth="1.900">
              <path d="M23.200 12.500a10.800 10.800 0 11-3.700-8.200l2.700 2.500M22.300.5v6.300H16" />
            </svg>
          </ReloadSlot>
          <AddressBar>
            <InfoBubble>
              <svg width="22" height="22" viewBox="0 0 22 22" fill="none" stroke="#5c5c5c" strokeWidth="1.600">
                <circle cx="11" cy="11" r="10" />
                <path d="M11 9.500v6.500M11 5.800v2" />
              </svg>
            </InfoBubble>
            <Url>
              <b>localhost</b>:4200/login
            </Url>
            <AddressActions>
              <svg width="21" height="21" viewBox="0 0 21 21" fill="none" stroke="#6a6a6a" strokeWidth="1.400" strokeLinejoin="round">
                <path d="M13.500 1a6.300 6.300 0 11-1.300 12.400L10 15.300H8v2.200H5.800V20H1v-4l6.800-6.800A6.300 6.300 0 0113.500 1z" />
                <circle cx="15.300" cy="5.700" r="1" fill="#6a6a6a" stroke="none" />
              </svg>
              <svg width="26" height="25" viewBox="0 0 26 25" fill="none" stroke="#6a6a6a" strokeWidth="1.500" strokeLinejoin="round">
                <path d="M13 1.500l3.500 7.300 8 1.100-5.800 5.600 1.400 8L13 19.700l-7.100 3.800 1.400-8L1.500 9.900l8-1.100z" />
              </svg>
            </AddressActions>
          </AddressBar>
          <ToolbarActions>
            <ToolSlot $ml={20}>
              <svg width="25" height="26" viewBox="0 0 25 26" fill="none" stroke="#111" strokeWidth="1.900" strokeLinejoin="round">
                <path d="M8.800 4.500a3.200 3.200 0 016.400 0H19q2.500 0 2.500 2.500v3.200h-1.600a2.900 2.900 0 000 5.800h1.600V19q0 2.500-2.500 2.500h-3.800a3.200 3.200 0 01-6.400 0H7Q4.500 21.500 4.500 19v-2.700a3.200 3.200 0 010-6.400V7Q4.500 4.500 7 4.500z" />
              </svg>
            </ToolSlot>
            <ToolDivider />
            <ToolSlot $ml={16}>
              <svg width="26" height="25" viewBox="0 0 26 25" fill="none" stroke="#111" strokeWidth="1.900" strokeLinejoin="round" strokeLinecap="round">
                <path d="M15.500 9l-3.200-7-3.200 7-7.600 1 5.500 5.300-1.400 7.900 6.700-3.700M17 9.500h8M17 14.500h8M16 19.500h9" />
              </svg>
            </ToolSlot>
            <ToolSlot $ml={23}>
              <svg width="34" height="34" viewBox="0 0 34 34">
                <defs>
                  <clipPath id="avatar">
                    <circle cx="17" cy="17" r="17" />
                  </clipPath>
                </defs>
                <g clipPath="url(#avatar)">
                  <rect width="34" height="34" fill="#d2d0ce" />
                  <circle cx="17" cy="13" r="7.500" fill="#8f8b87" />
                  <ellipse cx="17" cy="31" rx="12" ry="9" fill="#8f8b87" />
                </g>
              </svg>
            </ToolSlot>
            <ToolSlot $ml={28}>
              <svg width="20" height="6" viewBox="0 0 20 6">
                <circle cx="2.200" cy="3" r="2" />
                <circle cx="10" cy="3" r="2" />
                <circle cx="17.800" cy="3" r="2" />
              </svg>
            </ToolSlot>
            <ToolSlot $ml={30}>
              <Copilot w={33} h={31} id="cpA" />
            </ToolSlot>
          </ToolbarActions>
        </Toolbar>

        <PageFrame>
          <Page>
            <Card>
              <CardHeader>
                <Brand>
                  <AccountCircle />
                  <BrandName>TM</BrandName>
                </Brand>
                <Heading>Connexion</Heading>
              </CardHeader>
              <CardBody>
                <Hero>
                  <FaRightToBracket size={96} />
                </Hero>
                <Lead>Connectez-vous à votre compte</Lead>
                <Label $top={36} $gap={11}>
                  <FaEnvelope size={24} />
                  <span>Email</span>
                </Label>
                <Field>admin@gmail.com</Field>
                <Label $top={25} $gap={11}>
                  <FaLock size={24} style={{ width: 21 }} />
                  <span>Mot de passe</span>
                </Label>
                <Field $lift={1}>•••••••••</Field>
                <Submit type="button">
                  <FaRightToBracket size={30} />
                  <span>Se connecter</span>
                </Submit>
                <Hint>Pas encore de compte ?</Hint>
                <SignUp>
                  <FaUserPlus size={24} style={{ width: 30 }} />
                  <span>Créer un compte</span>
                </SignUp>
              </CardBody>
            </Card>
          </Page>
        </PageFrame>

        <Taskbar>
          <Weather>
            <WeatherIcon />
            <Lines>
              <span>30°C</span>
              <Muted>Eclaircies</Muted>
            </Lines>
          </Weather>
          <StartSlot>
            <WindowsStart />
          </StartSlot>
          <Search>
            <svg width="23" height="23" viewBox="0 0 23 23" fill="none" stroke="#2b2b2b" strokeWidth="2.300">
              <circle cx="10" cy="10" r="8.800" />
              <path d="M16 16l6 6" strokeLinecap="round" strokeWidth="2.800" />
            </svg>
            <SearchText>Rechercher</SearchText>
            <Tiger />
          </Search>
          <Apps>
            {apps.map((a, i) => (
              <AppCell key={i}>
                {a.icon}
                {a.pip && <Pip />}
              </AppCell>
            ))}
          </Apps>
          <Tray>
            <svg width="17" height="11" viewBox="0 0 17 11" fill="none" stroke="#1c1c1e" strokeWidth="2">
              <path d="M1 10l7.500-8L16 10" />
            </svg>
            <svg width="26" height="22" viewBox="0 0 26 22" style={{ marginLeft: 27 }}>
              <path fill="#f0f0f0" stroke="#222" strokeWidth="1.400" d="M6 16.500a5 5 0 01-.5-9.500A7.500 7.500 0 0119 6a5 5 0 015.500 5c0 3-2 5.500-5 5.500z" />
              <path fill="#8b8b8b" d="M6 7a7 7 0 0112.500-1L11 10.500z" />
              <path fill="#bcbcbc" d="M1.500 11.500Q2 8 6 7.500l12 8H6Q2 15.500 1.500 11.500z" />
              <circle cx="18.500" cy="15" r="6.500" fill="#fff" />
              <path fill="none" stroke="#1769c2" strokeWidth="1.500" d="M14.300 14a4.400 4.400 0 018-1.300M22.700 16a4.400 4.400 0 01-8 1.300M22.700 10v3h-3M14.300 20v-3h3" />
            </svg>
            <Language>ENG</Language>
            <TrayGroup>
              <svg width="24" height="18" viewBox="0 0 24 18" fill="none" stroke="#1c1c1e" strokeWidth="1.700" strokeLinecap="round">
                <path d="M1 7a15.500 15.500 0 0122 0M4.500 10.300a10.600 10.600 0 0115 0M8 13.300a5.700 5.700 0 018 0" />
                <circle cx="12" cy="15.800" r="1.400" fill="#1c1c1e" stroke="none" />
              </svg>
              <svg width="25" height="20" viewBox="0 0 25 20" fill="none" stroke="#1c1c1e" strokeWidth="1.600" strokeLinejoin="round" strokeLinecap="round">
                <path d="M1 7h4l5.500-5v16L5 13H1zM14 7.500q1.800 2.500 0 5" />
                <path d="M17 4.500q4 5.500 0 11M20 1.500q7 8.500 0 17" stroke="#b3aaa7" />
              </svg>
              <svg width="24" height="17" viewBox="0 0 24 17">
                <rect x="1" y="1.500" width="19.500" height="14" rx="3" fill="none" stroke="#1c1c1e" strokeWidth="1.700" />
                <rect x="3.500" y="4" width="5.500" height="9" fill="#111" />
                <path d="M21 5.500q3 0 3 3t-3 3z" fill="#111" />
              </svg>
            </TrayGroup>
            <Clock>
              <Lines $right>
                <span>11:43</span>
                <span>29/07/2025</span>
              </Lines>
            </Clock>
            <svg width="22" height="24" viewBox="0 0 22 24">
              <path fill="#1c1c1e" d="M2.500 17V9a7.500 7.500 0 0110-7v5h6v10l1.500 2H1zM6.500 20.500h7Q13 23 10 23t-3.500-2.500z" />
              <path fill="none" stroke="#eee4e1" strokeWidth="1.500" d="M8 8.500h5L8 14h5" />
              <path fill="none" stroke="#1c1c1e" strokeWidth="1.600" d="M15 2h5l-5 6h5.500" />
            </svg>
          </Tray>
        </Taskbar>
      </Screen>
    </>
  );
}
